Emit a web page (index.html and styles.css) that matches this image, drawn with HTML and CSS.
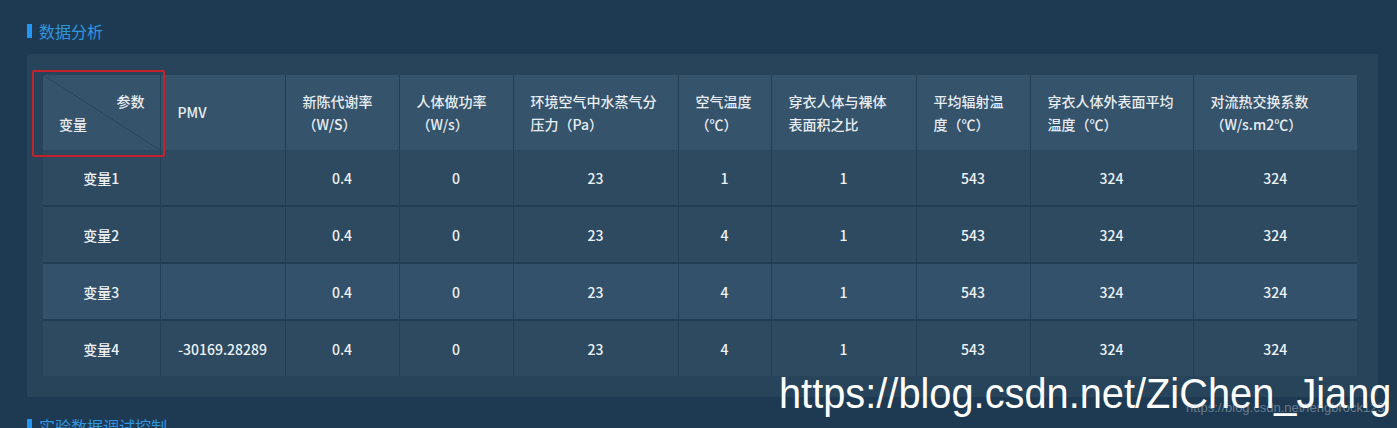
FILE: index.html
```html
<!DOCTYPE html>
<html lang="zh-CN">
<head>
<meta charset="utf-8">
<title>数据分析</title>
<link rel="stylesheet" href="styles.css">
</head>
<body>
<div class="page">
  <div class="section-title">数据分析</div>
  <div class="panel">
    <table class="data-table">
      <colgroup>
        <col style="width:117px"><col style="width:125px"><col style="width:114px"><col style="width:114px"><col style="width:165px"><col style="width:93px"><col style="width:145px"><col style="width:114px"><col style="width:163px"><col style="width:164px">
      </colgroup>
      <thead>
        <tr>
          <th class="corner">
            <span class="corner-top">参数</span>
            <span class="corner-bottom">变量</span>
            <span class="highlight"></span>
          </th>
          <th>PMV</th>
          <th>新陈代谢率<br>（W/S）</th>
          <th>人体做功率<br>（W/s）</th>
          <th>环境空气中水蒸气分<br>压力（Pa）</th>
          <th>空气温度<br>（℃）</th>
          <th>穿衣人体与裸体<br>表面积之比</th>
          <th>平均辐射温<br>度（℃）</th>
          <th>穿衣人体外表面平均<br>温度（℃）</th>
          <th>对流热交换系数<br>（W/s.m2℃）</th>
        </tr>
      </thead>
      <tbody>
        <tr><td>变量1</td><td></td><td>0.4</td><td>0</td><td>23</td><td>1</td><td>1</td><td>543</td><td>324</td><td>324</td></tr>
        <tr><td>变量2</td><td></td><td>0.4</td><td>0</td><td>23</td><td>4</td><td>1</td><td>543</td><td>324</td><td>324</td></tr>
        <tr class="hover"><td>变量3</td><td></td><td>0.4</td><td>0</td><td>23</td><td>4</td><td>1</td><td>543</td><td>324</td><td>324</td></tr>
        <tr><td>变量4</td><td>-30169.28289</td><td>0.4</td><td>0</td><td>23</td><td>4</td><td>1</td><td>543</td><td>324</td><td>324</td></tr>
      </tbody>
    </table>
  </div>
  <div class="section-title second">实验数据调试控制</div>
</div>
<div class="watermark">https://blog.csdn.net/ZiChen_Jiang</div>
<div class="watermark-small">https://blog.csdn.net/fengbrock123</div>
</body>
</html>
```
FILE: styles.css
```css
html, body {
  margin: 0;
  padding: 0;
  height: 100%;
  overflow: hidden;
}
body {
  background: #1e3a52;
  font-family: "Noto Sans CJK SC", "Noto Sans", sans-serif;
  color: #e6edf3;
  position: relative;
}
.page {
  padding: 20px 19px 0 27px;
}
.section-title {
  display: flex;
  align-items: center;
  height: 22px;
  font-size: 16px;
  color: #2f97e0;
  margin-bottom: 12px;
}
.section-title::before {
  content: "";
  width: 5px;
  height: 14px;
  background: #2196f3;
  margin-right: 7px;
}
.section-title.second {
  margin-top: 18px;
}
.panel {
  background: #27445b;
  border-radius: 3px;
  padding: 21px 21px 21px 16px;
}
.data-table {
  width: 1314px;
  table-layout: fixed;
  border-collapse: collapse;
  font-size: 14px;
  font-weight: 500;
}
.data-table thead tr {
  background: #35536a;
}
.data-table th {
  height: 75px;
  padding: 0 6px 0 17px;
  text-align: left;
  font-weight: 500;
  line-height: 23px;
  color: #e8eef4;
  border-left: 1px solid #223f56;
  vertical-align: middle;
  white-space: nowrap;
}
.data-table th:first-child,
.data-table td:first-child {
  border-left: none;
}
.data-table th.corner {
  position: relative;
  padding: 0;
  background: linear-gradient(to top right, transparent calc(50% - 0.6px), #22405a 50%, transparent calc(50% + 0.6px));
}
.corner-top {
  position: absolute;
  right: 15px;
  top: 15px;
}
.corner-bottom {
  position: absolute;
  left: 16px;
  top: 38px;
}
.highlight {
  position: absolute;
  left: -11px;
  top: -5px;
  width: 129px;
  height: 83px;
  border: 2px solid #c2222b;
  border-radius: 2px;
}
.data-table tbody tr {
  background: #2d4a61;
  border-top: 2px solid #213d54;
}
.data-table tbody tr:first-child {
  border-top: none;
}
.data-table tbody tr.hover {
  background: #33516a;
}
.data-table td {
  height: 55px;
  padding: 0;
  text-align: center;
  color: #eef3f7;
  border-left: 1px solid #223f56;
}
.watermark {
  position: absolute;
  left: 779px;
  top: 368px;
  font-family: "Liberation Sans", Arial, sans-serif;
  font-size: 43px;
  color: #ffffff;
  white-space: nowrap;
  line-height: 50px;
  transform: scaleX(0.925);
  transform-origin: left center;
}
.watermark-small {
  position: absolute;
  left: 1186px;
  top: 400px;
  font-family: "Liberation Sans", Arial, sans-serif;
  font-size: 13px;
  color: rgba(200, 210, 220, 0.45);
  white-space: nowrap;
}
```
